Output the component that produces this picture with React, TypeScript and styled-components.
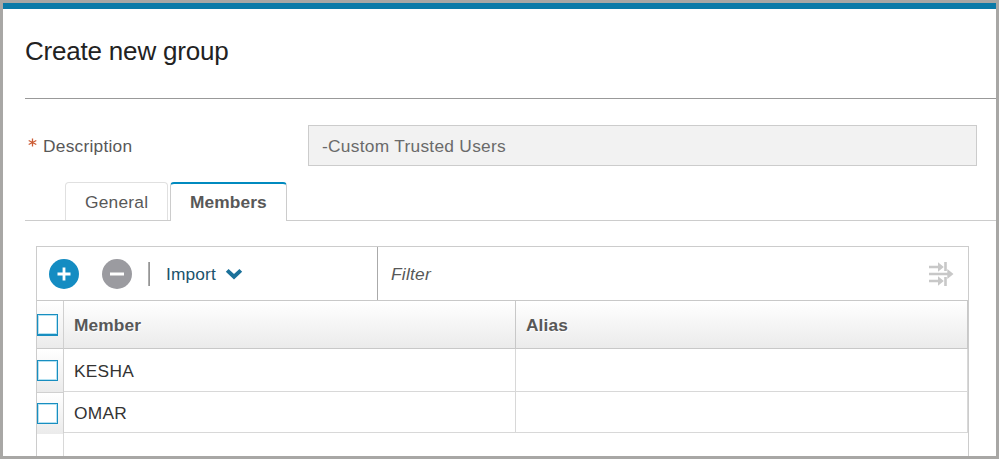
import React from "react";
import styled, { createGlobalStyle } from "styled-components";

const GlobalStyle = createGlobalStyle`
  *, *::before, *::after { box-sizing: border-box; }
  body {
    margin: 0;
    background: #fff;
    font-family: "Liberation Sans", Arial, sans-serif;
    font-size: 17.33px;
    line-height: 20px;
    letter-spacing: 0.24px;
    color: #585858;
  }
`;

const Frame = styled.main`
  width: 999px;
  height: 459px;
  border: 3px solid #a8a7a5;
  overflow: hidden;
  display: flex;
  flex-direction: column;
`;

const Accent = styled.div`
  flex: none;
  height: 6px;
  background: #0b7aa8;
`;

const Header = styled.header`
  flex: none;
  height: 90px;
  margin-left: 22px;
  padding-top: 27px;
  border-bottom: 1px solid #999;
`;

const Title = styled.h1`
  margin: 0;
  font-size: 26px;
  line-height: 30px;
  font-weight: 400;
  letter-spacing: -0.2px;
  color: #222;
`;

const FieldRow = styled.div`
  flex: none;
  display: flex;
  align-items: center;
  height: 41px;
  margin: 26px 19px 0 25px;
`;

const Label = styled.label`
  display: flex;
  gap: 6px;
  width: 280px;
  padding-top: 1px;
`;

const Asterisk = styled.svg`
  display: block;
  width: 9px;
  height: 11px;
  margin-top: 2px;
`;

const ReadOnlyField = styled.div`
  flex: 1;
  height: 41px;
  padding: 10px 13px 0;
  border: 1px solid #ccc;
  background: #f2f2f2;
  color: #6a6a6a;
  letter-spacing: 0.28px;
`;

const TabBar = styled.div`
  flex: none;
  display: flex;
  gap: 2px;
  height: 39px;
  margin: 16px 0 0 22px;
  padding-left: 40px;
  border-bottom: 1px solid #ccc;
`;

const Tab = styled.div<{ $active?: boolean }>`
  width: ${(p) => (p.$active ? 117 : 103)}px;
  height: ${(p) => (p.$active ? 39 : 38)}px;
  padding: ${(p) => (p.$active ? 8 : 9)}px 0 0 19px;
  border: 1px solid ${(p) => (p.$active ? "#ccc" : "#e0e0e0")};
  border-top: ${(p) => (p.$active ? "2px solid #008abf" : "1px solid #e0e0e0")};
  border-bottom: 0;
  border-radius: 4px 4px 0 0;
  background: #fff;
  font-weight: ${(p) => (p.$active ? 700 : 400)};
  letter-spacing: ${(p) => (p.$active ? 0.1 : 0.24)}px;
`;

const Panel = styled.section`
  flex: 1;
  display: flex;
  flex-direction: column;
  width: 933px;
  margin: 25px 0 0 33px;
  border: 1px solid #ccc;
  border-bottom: 0;
`;

const Toolbar = styled.div`
  flex: none;
  display: flex;
  height: 54px;
  border-bottom: 1px solid #c8c8c8;
`;

const Actions = styled.div`
  display: flex;
  align-items: center;
  width: 341px;
  padding-left: 12px;
  border-right: 1px solid #aaa;
`;

const RoundButton = styled.button<{ $tone: string }>`
  width: 30px;
  height: 30px;
  margin: 0 23px 0 0;
  padding: 0;
  border: 0;
  border-radius: 50%;
  background: ${(p) => p.$tone};
  svg { display: block; }
`;

const Divider = styled.span`
  width: 2px;
  height: 24px;
  margin: 0 16px 0 -7px;
  background: linear-gradient(90deg, #bbb, #888);
`;

const ImportMenu = styled.div`
  display: flex;
  align-items: center;
  gap: 9px;
  color: #1b536c;
  letter-spacing: 0.15px;
`;

const FilterArea = styled.div`
  flex: 1;
  display: flex;
  align-items: center;
  justify-content: space-between;
  padding: 0 14px 0 13px;
  font-style: italic;
`;

const Row = styled.div<{ $height: number }>`
  flex: none;
  display: grid;
  grid-template-columns: 27px 452px 452px;
  grid-template-rows: 100%;
  height: ${(p) => p.$height}px;
`;

const HeadCell = styled.div`
  padding: 14px 0 0 10px;
  border-right: 1px solid #c8c8c8;
  border-bottom: 1px solid #c8c8c8;
  background: linear-gradient(#fff, #ebebeb);
  font-weight: 700;
  letter-spacing: 0.1px;
  text-shadow: 1px 1px 1px #fff;
`;

const Cell = styled.div<{ $top: number }>`
  padding: ${(p) => p.$top}px 0 0 10px;
  border-right: 1px solid #d8d8d8;
  border-bottom: 1px solid #d8d8d8;
  color: #333;
`;

const CheckCell = styled.div<{ $height: number; $shift?: number; $pad: number; $edge: string }>`
  height: ${(p) => p.$height}px;
  margin-top: ${(p) => p.$shift ?? 0}px;
  padding-top: ${(p) => p.$pad}px;
  border-right: 1px solid #d0d0d0;
  border-bottom: 1px solid ${(p) => p.$edge};
  background: linear-gradient(#fff, #ebebeb);
`;

const Checkbox = styled.span<{ $strong?: boolean }>`
  display: block;
  width: 21px;
  height: ${(p) => (p.$strong ? 22 : 21)}px;
  border: 1px solid #188ec0;
  border-bottom-width: ${(p) => (p.$strong ? 2 : 1)}px;
  box-shadow: inset 0 0 0 1px #b5e1f1;
  background: #fff;
`;

const EmptyArea = styled.div`
  flex: 1;
  width: 27px;
  border-right: 1px solid #d8d8d8;
`;

const members = [
  { name: "KESHA", height: 43, textTop: 12, check: { height: 44, shift: 0, pad: 11, edge: "#d0d0d0" } },
  { name: "OMAR", height: 41, textTop: 11, check: { height: 41, shift: 1, pad: 10, edge: "#ebebeb" } },
];

export default function App() {
  return (
    <>
      <GlobalStyle />
      <Frame>
        <Accent />
        <Header>
          <Title>Create new group</Title>
        </Header>
        <FieldRow>
          <Label>
            <Asterisk viewBox="0 0 9 11" fill="none" stroke="#cc5c35" strokeWidth="1.3">
              <path d="M4.5 .5v8M.7 2.5l7.6 4M8.3 2.5l-7.6 4" />
            </Asterisk>
            Description
          </Label>
          <ReadOnlyField>-Custom Trusted Users</ReadOnlyField>
        </FieldRow>
        <TabBar>
          <Tab>General</Tab>
          <Tab $active>Members</Tab>
        </TabBar>
        <Panel>
          <Toolbar>
            <Actions>
              <RoundButton $tone="#148cc2" aria-label="Add">
                <svg width="30" height="30" stroke="#fff" strokeWidth="2.8">
                  <path d="M8.5 15h13M15 8.5v13" />
                </svg>
              </RoundButton>
              <RoundButton $tone="#9b9ba0" aria-label="Remove">
                <svg width="30" height="30" stroke="#fff" strokeWidth="3">
                  <path d="M8 15h14" />
                </svg>
              </RoundButton>
              <Divider />
              <ImportMenu>
                Import
                <svg width="18" height="12" fill="none" stroke="#1b719a" strokeWidth="4">
                  <path d="M2.2 2.4 9 8.8l6.8-6.4" />
                </svg>
              </ImportMenu>
            </Actions>
            <FilterArea>
              Filter
              <svg width="26" height="26" fill="#c8c8c8">
                <path d="M1 4.8h10v2.4H1zM1 11.7h19v2.6H1zM1 18.8h10v2.4H1zM16.2 1h2.6v9h-2.6zM16.2 16h2.6v9h-2.6z" />
                <path d="M10 1.2 15.8 6 10 10.8zM19.3 8 25.5 13l-6.2 5zM10 15.2l5.8 4.8-5.8 4.8z" />
              </svg>
            </FilterArea>
          </Toolbar>
          <Row $height={48}>
            <CheckCell $height={48} $pad={13} $edge="#c8c8c8">
              <Checkbox $strong />
            </CheckCell>
            <HeadCell>Member</HeadCell>
            <HeadCell>Alias</HeadCell>
          </Row>
          {members.map(({ name, height, textTop, check }) => (
            <Row key={name} $height={height}>
              <CheckCell $height={check.height} $shift={check.shift} $pad={check.pad} $edge={check.edge}>
                <Checkbox />
              </CheckCell>
              <Cell $top={textTop}>{name}</Cell>
              <Cell $top={textTop} />
            </Row>
          ))}
          <EmptyArea />
        </Panel>
      </Frame>
    </>
  );
}
